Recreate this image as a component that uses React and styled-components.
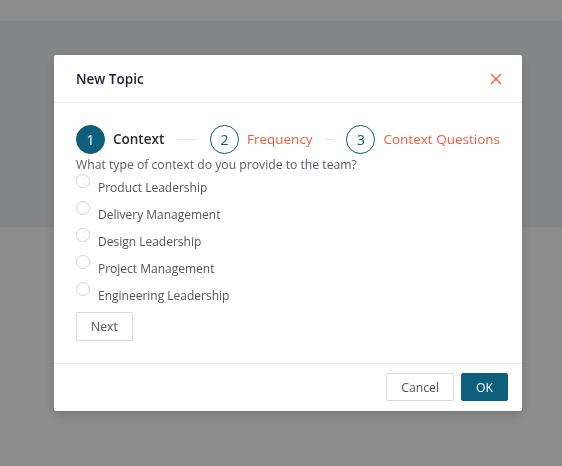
import React from 'react';
import styled, { createGlobalStyle } from 'styled-components';

const GlobalStyle = createGlobalStyle`
  * { box-sizing: border-box; }
  html, body { margin: 0; padding: 0; background: #fff; }
  body { font-family: "Open Sans", "Noto Sans", sans-serif; }
`;

const Page = styled.div`
  width: 562px;
  height: 466px;
  display: flex;
  flex-direction: column;
`;

const PageHeader = styled.div`
  height: 21px;
  background: #ffffff;
`;

const PageBand = styled.div`
  height: 206px;
  background: #f1f2f5;
`;

const Overlay = styled.div`
  position: fixed;
  inset: 0;
  background: rgba(0, 0, 0, 0.45);
  padding: 55px 40px 0 54px;
`;

const Modal = styled.div`
  width: 468px;
  background: #fff;
  border-radius: 2px;
  box-shadow: 0 4px 12px rgba(0, 0, 0, 0.15);
`;

const ModalHeader = styled.div`
  height: 48px;
  display: flex;
  align-items: center;
  justify-content: space-between;
  padding: 0 19px 0 22px;
  border-bottom: 1px solid #ececec;
`;

const Title = styled.h3`
  margin: 0;
  font-size: 13.5px;
  font-weight: 600;
  color: #1d1d35;
`;

const CloseButton = styled.button`
  border: 0;
  background: none;
  padding: 0;
  width: 14px;
  height: 16px;
  display: flex;
  align-items: center;
  justify-content: center;
  cursor: pointer;
`;

const Body = styled.div`
  padding: 21px 22px 22px;
`;

const Steps = styled.div`
  display: flex;
  align-items: center;
  height: 30px;
`;

const Step = styled.div`
  display: flex;
  align-items: center;
  gap: 8px;
`;

const StepCircle = styled.div`
  width: 29px;
  height: 29px;
  border-radius: 50%;
  display: flex;
  align-items: center;
  justify-content: center;
  font-size: 14px;
  color: ${({ active }) => (active ? '#fff' : '#0e5a74')};
  background: ${({ active }) => (active ? '#0e5f7c' : '#fff')};
  border: 1px solid #0e5a74;
`;

const StepLabel = styled.span`
  font-size: 13.5px;
  font-weight: ${({ active }) => (active ? 600 : 400)};
  color: ${({ active }) => (active ? '#2b2b2b' : '#f4593d')};
  white-space: nowrap;
`;

const StepLine = styled.div`
  height: 1px;
  width: ${({ w }) => w}px;
  background: #e6e6e6;
  margin: 0 ${({ gap }) => gap}px;
`;

const Question = styled.p`
  margin: 2px 0 0;
  font-size: 12.2px;
  line-height: 17px;
  color: #5a5a66;
`;

const Options = styled.div`
  display: flex;
  flex-direction: column;
`;

const Option = styled.label`
  display: flex;
  align-items: flex-start;
  gap: 8px;
  height: 27px;
  cursor: pointer;
`;

const Radio = styled.span`
  margin-top: 1px;
  width: 14px;
  height: 14px;
  border-radius: 50%;
  border: 1px solid #d4d4d4;
  background: #fff;
  flex-shrink: 0;
`;

const OptionText = styled.span`
  margin-top: 6px;
  font-size: 12px;
  line-height: 17px;
  color: #555;
`;

const Button = styled.button`
  height: ${({ h }) => h}px;
  padding: 0 ${({ pad }) => pad}px;
  font-family: inherit;
  font-size: 12.2px;
  border-radius: 2px;
  cursor: pointer;
  border: 1px solid ${({ primary }) => (primary ? '#0e5f7c' : '#d9d9d9')};
  background: ${({ primary }) => (primary ? '#0e5f7c' : '#fff')};
  color: ${({ primary }) => (primary ? '#fff' : '#555')};
`;

const NextRow = styled.div`
  margin-top: 4px;
`;

const Footer = styled.div`
  display: flex;
  justify-content: flex-end;
  gap: 7px;
  padding: 9px 14px 10px;
  border-top: 1px solid #ececec;
`;

const options = [
  'Product Leadership',
  'Delivery Management',
  'Design Leadership',
  'Project Management',
  'Engineering Leadership',
];

const App = () => (
  <>
    <GlobalStyle />
    <Page>
      <PageHeader />
      <PageBand />
    </Page>
    <Overlay>
      <Modal>
        <ModalHeader>
          <Title>New Topic</Title>
          <CloseButton aria-label="Close">
            <svg width="12" height="12" viewBox="0 0 12 12">
              <path d="M1 1L11 11M11 1L1 11" stroke="#f4593d" strokeWidth="1.4" fill="none" />
            </svg>
          </CloseButton>
        </ModalHeader>
        <Body>
          <Steps>
            <Step>
              <StepCircle active>1</StepCircle>
              <StepLabel active>Context</StepLabel>
            </Step>
            <StepLine w={24} gap={13} />
            <Step>
              <StepCircle>2</StepCircle>
              <StepLabel>Frequency</StepLabel>
            </Step>
            <StepLine w={12} gap={12} />
            <Step>
              <StepCircle>3</StepCircle>
              <StepLabel>Context Questions</StepLabel>
            </Step>
          </Steps>
          <Question>What type of context do you provide to the team?</Question>
          <Options>
            {options.map((o) => (
              <Option key={o}>
                <Radio />
                <OptionText>{o}</OptionText>
              </Option>
            ))}
          </Options>
          <NextRow>
            <Button pad={14} h={29}>Next</Button>
          </NextRow>
        </Body>
        <Footer>
          <Button pad={14} h={28}>Cancel</Button>
          <Button primary pad={14} h={28}>OK</Button>
        </Footer>
      </Modal>
    </Overlay>
  </>
);

export default App;
